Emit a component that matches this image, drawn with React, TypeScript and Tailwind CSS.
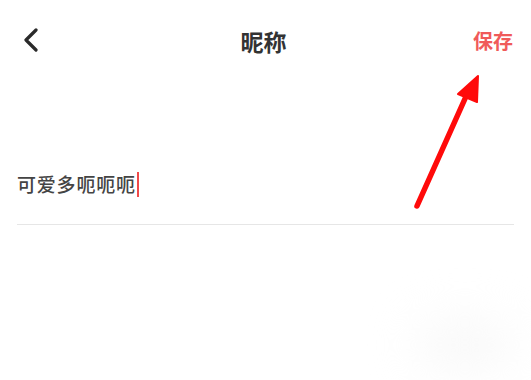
export default function App() {
  return (
    <div
      className="relative w-[531px] h-[380px] bg-white overflow-hidden"
      style={{ fontFamily: '"Noto Sans CJK SC", "Noto Sans", sans-serif' }}
    >
      {/* header */}
      <div className="flex items-center justify-between h-[82px] pl-[22px] pr-[18px]">
        <svg width="18" height="24" viewBox="0 0 18 24" className="mt-[-2px]">
          <path d="M14 2 L4 12 L14 22" fill="none" stroke="#2a2a2a" strokeWidth="3.2" strokeLinecap="round" strokeLinejoin="round" />
        </svg>
        <div className="text-[23px] font-bold text-[#333] ml-[14px]">昵称</div>
        <div className="text-[20px] font-bold text-[#f05a5a]">保存</div>
      </div>

      {/* input */}
      <div className="mx-[17px] mt-[82px] border-b border-[#e6e6e6] h-[61px]">
        <div className="flex items-center h-[40px]">
          <span className="text-[19px] font-medium text-[#444] tracking-[0.8px]">可爱多呃呃呃</span>
          <span className="w-[2px] h-[25px] bg-[#f04a4a] ml-[1px]" />
        </div>
      </div>

      {/* annotation arrow */}
      <svg className="absolute left-0 top-0" width="531" height="380" viewBox="0 0 531 380">
        <line x1="417" y1="206" x2="468" y2="92" stroke="#ff0a0a" strokeWidth="5.5" strokeLinecap="round" />
        <polygon points="478,76 458,94 477,102" fill="#ff0a0a" stroke="#ff0a0a" strokeWidth="2" strokeLinejoin="round" />
      </svg>

      {/* faint smudge */}
      <div className="absolute left-[420px] top-[325px] w-[90px] h-[40px] rounded-full bg-[#f7f7f7] blur-xl" />
    </div>
  );
}
